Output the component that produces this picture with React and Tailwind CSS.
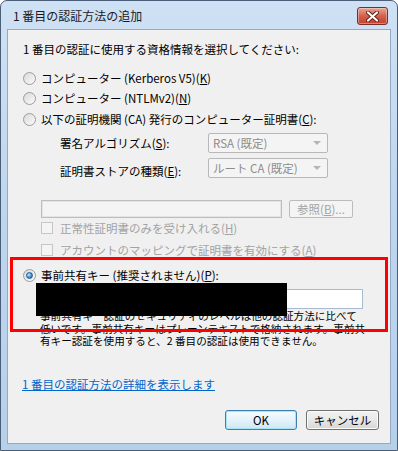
import React from 'react'

function Radio({ checked }) {
  return (
    <span className="flex h-[13px] w-[13px] shrink-0 items-center justify-center rounded-full border border-[#9c9c9c] bg-linear-to-br from-[#d9d9d9] to-[#fbfbfb]">
      {checked && (
        <span className="h-[7px] w-[7px] rounded-full border border-[#1d5a96] bg-[radial-gradient(circle_at_35%_35%,#c8ecff,#3d92d8_55%,#14579c)]" />
      )}
    </span>
  )
}

function Checkbox() {
  return <span className="block h-[12px] w-[12px] shrink-0 border border-[#c6c6c6] bg-[#f4f4f4]" />
}

function Select({ value }) {
  return (
    <div className="flex h-[20px] w-[120px] items-center justify-between rounded-[2px] border border-[#b8b8b8] bg-[#f4f4f4] pl-[4px] pr-[6px] text-[#8d8d8d]">
      <span>{value}</span>
      <span className="h-0 w-0 border-x-[4px] border-t-[4px] border-x-transparent border-t-[#b5b5b5]" />
    </div>
  )
}

export default function App() {
  return (
    <div className="relative h-[451px] w-[398px] overflow-hidden rounded-t-[7px] border border-[#4b5e78] bg-linear-to-b from-[#cfe1f4] via-[#bed5ee] to-[#b7d0ea] font-['Noto_Sans_CJK_JP',sans-serif] text-[11.5px] leading-[16px] text-black">
      {/* title bar */}
      <div className="flex h-[28px] items-center justify-between pl-[12px] pr-[9px] pt-[2px]">
        <span className="text-[12px] text-[#1a1a1a]">1 番目の認証方法の追加</span>
        <div className="flex h-[18px] w-[31px] items-center justify-center rounded-[3px] border border-[#7a2e28] bg-linear-to-b from-[#e8a493] via-[#d2604c] to-[#c4412e] shadow-[inset_0_0_0_1px_rgba(255,255,255,0.35)]">
          <svg width="13" height="11" viewBox="0 0 13 11">
            <path d="M2 1.5 L11 9.5 M11 1.5 L2 9.5" stroke="#5a2018" strokeWidth="4" strokeLinecap="round" />
            <path d="M2 1.5 L11 9.5 M11 1.5 L2 9.5" stroke="#ffffff" strokeWidth="2.2" strokeLinecap="round" />
          </svg>
        </div>
      </div>

      {/* client area */}
      <div className="ml-[6px] h-[415px] w-[384px] border border-[#93a9c4] bg-[#f0f0f0] pl-[15px] pr-[11px]">
        <div className="mt-[11px] flex h-[16px] items-center">1 番目の認証に使用する資格情報を選択してください:</div>

        <div className="mt-[11px] flex h-[20px] items-center gap-[5px]">
          <Radio />
          <span>コンピューター (Kerberos V5)(<u>K</u>)</span>
        </div>
        <div className="flex h-[20px] items-center gap-[5px]">
          <Radio />
          <span>コンピューター (NTLMv2)(<u>N</u>)</span>
        </div>
        <div className="mt-[1px] flex h-[20px] items-center gap-[5px]">
          <Radio />
          <span>以下の証明機関 (CA) 発行のコンピューター証明書(<u>C</u>):</span>
        </div>

        <div className="mt-[4px] flex h-[20px] items-center">
          <span className="ml-[37px] w-[148px]">署名アルゴリズム(<u>S</u>):</span>
          <Select value="RSA (既定)" />
        </div>
        <div className="mt-[5px] flex h-[20px] items-center">
          <span className="ml-[37px] w-[148px] pt-[6px]">証明書ストアの種類(<u>E</u>):</span>
          <Select value="ルート CA (既定)" />
        </div>

        <div className="mt-[22px] flex h-[18px] items-center">
          <div className="ml-[18px] h-[18px] w-[241px] border border-[#bdbdbd] bg-[#f4f4f4] shadow-[inset_0_0_0_1px_#e4e4e4]" />
          <div className="ml-[7px] flex h-[18px] w-[64px] items-center justify-center rounded-[2px] border border-[#bcbcbc] bg-[#f4f4f4] text-[#a3a3a3]">
            参照(<u>B</u>)...
          </div>
        </div>

        <div className="mt-[2px] flex h-[16px] items-center">
          <span className="ml-[18px]"><Checkbox /></span>
          <span className="ml-[7px] text-[#a3a3a3]">正常性証明書のみを受け入れる(<u>H</u>)</span>
        </div>
        <div className="mt-[6px] flex h-[16px] items-center">
          <span className="ml-[18px]"><Checkbox /></span>
          <span className="ml-[7px] text-[#a3a3a3]">アカウントのマッピングで証明書を有効にする(<u>A</u>)</span>
        </div>

        <div className="mt-[9px] flex h-[16px] items-center gap-[5px]">
          <Radio checked />
          <span>事前共有キー (推奨されません)(<u>P</u>):</span>
        </div>
        <div className="ml-[17px] mt-[6px] h-[20px] w-[323px] border border-[#a9bbd0] bg-white" />
        <div className="ml-[17px] mt-[1px] whitespace-nowrap text-[10.6px] leading-[12.5px]">
          <div>事前共有キー認証のセキュリティのレベルは他の認証方法に比べて</div>
          <div>低いです。事前共有キーはプレーンテキストで格納されます。事前共</div>
          <div>有キー認証を使用すると、2 番目の認証は使用できません。</div>
        </div>

        <div className="ml-[-1px] mt-[28px] flex h-[16px] items-center">
          <span className="text-[#0066cc] underline">1 番目の認証方法の詳細を表示します</span>
        </div>

        <div className="mt-[18px] flex justify-end gap-[9px]">
          <div className="flex h-[20px] w-[72px] items-center justify-center rounded-[3px] border border-[#3c7fb1] bg-linear-to-b from-[#f4fbfe] via-[#e6f3fa] to-[#cfe6f3] shadow-[inset_0_0_0_1px_#a8e4f8]">
            OK
          </div>
          <div className="flex h-[20px] w-[73px] items-center justify-center rounded-[3px] border border-[#707070] bg-linear-to-b from-[#f2f2f2] via-[#e8e8e8] to-[#d6d6d6] shadow-[inset_0_0_0_1px_#fbfbfb]">
            キャンセル
          </div>
        </div>
      </div>

      {/* annotation overlays */}
      <div className="absolute left-[9px] top-[256px] h-[75px] w-[378px] border-[3px] border-[#ff0000]" />
      <div className="absolute left-[35px] top-[282px] h-[33px] w-[251px] bg-black" />
    </div>
  )
}
